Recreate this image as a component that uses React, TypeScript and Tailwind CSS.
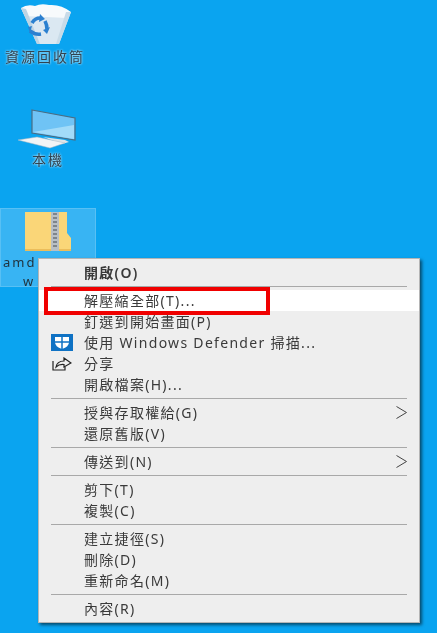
const FONT = "font-['Noto_Sans','Noto_Sans_CJK_TC',sans-serif]";

type Row =
  | { kind: "sep" }
  | { kind: "item"; label: string; bold?: boolean; active?: boolean; sub?: boolean; icon?: "shield" | "share" };

const rows: Row[] = [
  { kind: "item", label: "開啟(O)", bold: true },
  { kind: "sep" },
  { kind: "item", label: "解壓縮全部(T)...", active: true },
  { kind: "item", label: "釘選到開始畫面(P)" },
  { kind: "item", label: "使用 Windows Defender 掃描...", icon: "shield" },
  { kind: "item", label: "分享", icon: "share" },
  { kind: "item", label: "開啟檔案(H)..." },
  { kind: "sep" },
  { kind: "item", label: "授與存取權給(G)", sub: true },
  { kind: "item", label: "還原舊版(V)" },
  { kind: "sep" },
  { kind: "item", label: "傳送到(N)", sub: true },
  { kind: "sep" },
  { kind: "item", label: "剪下(T)" },
  { kind: "item", label: "複製(C)" },
  { kind: "sep" },
  { kind: "item", label: "建立捷徑(S)" },
  { kind: "item", label: "刪除(D)" },
  { kind: "item", label: "重新命名(M)" },
  { kind: "sep" },
  { kind: "item", label: "內容(R)" },
];

function RecycleBin() {
  return (
    <svg width="56" height="42" viewBox="0 0 56 42">
      <path d="M4 5 L54 9 L42 41 L20 41 Z" fill="#dbe8f2" />
      <path d="M4 5 Q10 1 18 3 Q24 0 32 2 Q44 1 54 9 L50 15 L8 13 Z" fill="#f7fafc" />
      <path d="M4 5 L20 41 L23 41 L9 6 Z" fill="#bdd4e4" />
      <path d="M49 9 L39 41 L42 41 L54 9 Z" fill="#c8dbe8" />
      {/* recycle arrows */}
      <path d="M15 20 Q18 15 23 15 M28 18 Q30 22 30 26 M24 31 Q18 32 13 28" fill="none" stroke="#2b80d0" strokeWidth="3.6" />
      <path d="M23 11 L28 16 L22 19 Z M33 24 L30 31 L26 27 Z M11 24 L15 23 L13 30 Z" fill="#2b80d0" />
    </svg>
  );
}

function Computer() {
  return (
    <svg width="60" height="40" viewBox="0 0 60 40">
      <path d="M14 1 L57 9 L57 31 L14 24 Z" fill="#6fc3f5" stroke="#4a6d84" strokeWidth="1.2" />
      <path d="M15 23 L56 30 L56 16 Z" fill="#a2dbf9" />
      <path d="M25 28 L47 31 L51 33 L44 35 L33 31 Z" fill="#dce5ea" />
      <path d="M0 31 L19 28 L47 34 L32 39 Z" fill="#f1f4f6" stroke="#a9b7c0" strokeWidth="0.5" />
    </svg>
  );
}

function ZipFolder() {
  return (
    <svg width="46" height="41" viewBox="0 0 46 41" className="shrink-0">
      <path d="M0 1 H42 V22 L46 27 V40 H0 Z" fill="#fad678" />
      <path d="M0 38 H46 V40 H0 Z" fill="#ebbd5b" />
      <rect x="26" y="1" width="8" height="39" fill="#b9bfc4" />
      <path d="M28 3 H32 M28 7 H32 M28 11 H32 M28 15 H32 M28 19 H32 M28 23 H32 M28 27 H32 M28 31 H32 M28 35 H32" stroke="#6c7378" strokeWidth="1.6" />
    </svg>
  );
}

function ShieldIcon() {
  return (
    <svg width="22" height="17" viewBox="0 0 22 17">
      <rect width="22" height="17" fill="#0f72c4" />
      <path d="M4 3 H18 V8 Q18 13 11 15 Q4 13 4 8 Z" fill="#ffffff" />
      <path d="M11 3 V15 M4 8 H18" stroke="#0f72c4" strokeWidth="1.5" />
    </svg>
  );
}

function ShareIcon() {
  return (
    <svg width="20" height="14" viewBox="0 0 20 14" fill="none" stroke="#222222" strokeWidth="1.2">
      <path d="M1 4 V13 H13 V10" />
      <path d="M4 10 Q5 4 12 4 V1 L19 6 L12 10 V7.5 Q7 7 4 10 Z" />
    </svg>
  );
}

function Chevron() {
  return (
    <svg width="11" height="13" viewBox="0 0 11 13" fill="none" stroke="#444444" strokeWidth="1">
      <path d="M0.5 0.5 L10.5 6.5 L0.5 12.5" />
    </svg>
  );
}

export default function App() {
  return (
    <div className={`relative h-[633px] w-[437px] overflow-hidden bg-[#0aa4f0] blur-[0.4px] ${FONT}`}>
      {/* desktop icons */}
      <div className="absolute left-0 top-[3px] flex w-[90px] flex-col items-center gap-[5px]">
        <RecycleBin />
        <span className="whitespace-nowrap text-[14px] leading-[14px] tracking-[2px] text-[#31424f] drop-shadow-[0_0_1px_#ffffff]">資源回收筒</span>
      </div>
      <div className="absolute left-[18px] top-[109px] flex w-[60px] flex-col items-center gap-[4px]">
        <Computer />
        <span className="whitespace-nowrap text-[14px] leading-[14px] tracking-[2px] text-[#31424f] drop-shadow-[0_0_1px_#ffffff]">本機</span>
      </div>
      <div className="absolute left-0 top-[208px] flex h-[79px] w-[96px] flex-col items-center border border-[#58c0f4] bg-[#38b4f3] pt-[2px]">
        <ZipFolder />
        <span className="mt-[4px] w-full shrink-0 pl-[2px] text-[13px] leading-[13px] tracking-[2px] text-[#20333f]">amd</span>
        <span className="mt-[6px] w-full shrink-0 pl-[22px] text-[13px] leading-[13px] text-[#20333f]">w</span>
      </div>

      {/* context menu */}
      <div className="absolute left-[38px] top-[258px] h-[365px] w-[382px] border border-[#b5b5b5] bg-[#eeeeee] pt-[3px] shadow-[2px_2px_3px_rgba(0,0,0,0.55)]">
        {rows.map((row, i) =>
          row.kind === "sep" ? (
            <div key={i} className="flex h-[7px] items-center px-[12px]">
              <div className="h-px w-full bg-[#a8a8a8]" />
            </div>
          ) : (
            <div
              key={i}
              className={`relative flex h-[21px] items-center pl-[45px] text-[14px] tracking-[1.3px] text-[#3a3a3a] ${
                row.active ? "bg-white" : ""
              } ${row.bold ? "font-semibold" : ""}`}
            >
              {row.icon && (
                <span className="absolute left-[12px] flex w-[22px] justify-center">
                  {row.icon === "shield" ? <ShieldIcon /> : <ShareIcon />}
                </span>
              )}
              <span className="whitespace-nowrap">{row.label}</span>
              {row.sub && (
                <span className="absolute right-[12px]">
                  <Chevron />
                </span>
              )}
            </div>
          )
        )}
      </div>

      {/* red highlight */}
      <div className="absolute left-[44px] top-[287px] h-[28px] w-[226px] border-[4px] border-[#f00000]" />
    </div>
  );
}
